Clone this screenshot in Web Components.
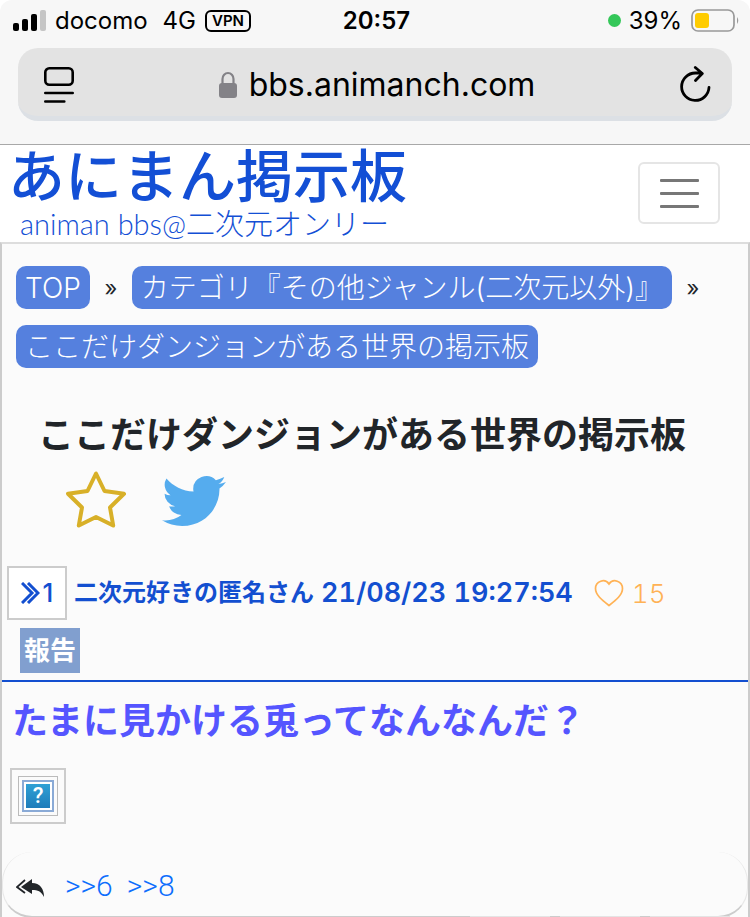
<!DOCTYPE html>
<html lang="ja">
<head>
<meta charset="utf-8">
<meta name="viewport" content="width=device-width, initial-scale=1">
<title>ここだけダンジョンがある世界の掲示板</title>
<style>
  html {
    height: 100%;
    overflow: hidden;
    background: #fff;
  }

  body {
    margin: 0;
    color: #212529;
    font-family: Inter, "Noto Sans CJK JP", sans-serif;
  }

  main {
    border: 2px solid #ccc;
    border-top-color: #ddd;
    border-bottom: 0;
    background: #fbfbfb;
  }
</style>
</head>
<body>
<browser-bar host="bbs.animanch.com">
  <status-bar carrier="docomo" network="4G" time="20:57" battery="39"></status-bar>
</browser-bar>
<site-header>
  <span>あにまん掲示板</span>
  <span slot="sub">animan bbs@二次元オンリー</span>
</site-header>
<main>
  <bread-crumbs>
    <crumb-link>TOP</crumb-link>
    <crumb-link>カテゴリ『その他ジャンル(二次元以外)』</crumb-link>
    <crumb-link last>ここだけダンジョンがある世界の掲示板</crumb-link>
  </bread-crumbs>
  <thread-title>ここだけダンジョンがある世界の掲示板</thread-title>
  <thread-post number="1" name="二次元好きの匿名さん" date="21/08/23 19:27:54" likes="15">
    たまに見かける兎ってなんなんだ？
    <missing-image slot="image"></missing-image>
  </thread-post>
  <reply-list>
    <reply-link to="6"></reply-link>
    <reply-link to="8"></reply-link>
  </reply-list>
</main>

<script>
(function() {
  class StatusBar extends HTMLElement {
    constructor() {
      super();

      this.attachShadow({ mode: 'open' });

      this.shadowRoot.innerHTML = `
        <style>
          :host {
            display: grid;
            grid-template-columns: 1fr auto 1fr;
            align-items: center;
            height: 41px;
            padding: 0 10px 0 13px;
            color: #000;
            font-size: 24px;
            line-height: 30px;
          }
          div {
            display: flex;
            align-items: center;
          }
          .right {
            justify-content: flex-end;
          }
          svg {
            display: block;
          }
          .carrier {
            margin: 0 15px 0 8px;
          }
          .vpn {
            margin-left: 9px;
            padding: 0 5px;
            border: 2px solid #000;
            border-radius: 6px;
            font-size: 15px;
            font-weight: 600;
            line-height: 18px;
          }
          .time {
            font-weight: 600;
          }
          .dot {
            width: 13px;
            height: 13px;
            margin-right: 8px;
            border-radius: 50%;
            background: #34c759;
          }
          .battery {
            margin-left: 9px;
          }
        </style>

        <div>
          <svg width="34" height="22" viewBox="0 0 34 22">
            <rect x="0" y="13" width="6" height="8" rx="2"/>
            <rect x="9" y="9" width="6" height="12" rx="2"/>
            <rect x="18" y="4" width="6" height="17" rx="2"/>
            <rect x="27" y="0" width="6" height="21" rx="2" fill="#c5c5c5"/>
          </svg>
          <span class="carrier"></span>
          <span class="network"></span>
          <span class="vpn">VPN</span>
        </div>
        <div class="time"></div>
        <div class="right">
          <span class="dot"></span>
          <span class="percent"></span>
          <svg class="battery" width="49" height="24" viewBox="0 0 49 24">
            <rect x="1" y="1" width="42" height="21" rx="6" fill="none" stroke="#999" stroke-width="1.7"/>
            <rect x="4" y="4" width="14" height="15" rx="3" fill="#fc0"/>
            <path d="M46 8q2.500 3.500 0 7z" fill="#999"/>
          </svg>
        </div>
      `
    }

    connectedCallback() {
      this.shadowRoot.querySelector('.carrier').textContent = this.getAttribute('carrier');
      this.shadowRoot.querySelector('.network').textContent = this.getAttribute('network');
      this.shadowRoot.querySelector('.time').textContent = this.getAttribute('time');
      this.shadowRoot.querySelector('.percent').textContent = this.getAttribute('battery') + '%';
    }
  }

  class BrowserBar extends HTMLElement {
    constructor() {
      super();

      this.attachShadow({ mode: 'open' });

      this.shadowRoot.innerHTML = `
        <style>
          :host {
            display: block;
            padding-bottom: 23px;
            border-bottom: 1px solid #a8a8a8;
            border-radius: 12px 12px 0 0;
            background: #f7f7f7;
            color: #000;
          }
          .address {
            display: flex;
            align-items: center;
            justify-content: space-between;
            box-sizing: border-box;
            height: 73px;
            margin: 7px 18px 0;
            padding: 5px 20px 0 24px;
            border-bottom: 5px solid #dce0e5;
            border-radius: 20px;
            background: #e3e3e3;
          }
          .host {
            display: flex;
            align-items: center;
            gap: 12px;
            font-size: 32px;
            line-height: 40px;
          }
          button {
            padding: 0;
            border: 0;
            background: none;
          }
          svg {
            display: block;
          }
        </style>

        <slot></slot>
        <div class="address">
          <button>
            <svg width="34" height="38" viewBox="0 0 34 38" fill="none" stroke="#000" stroke-width="2.600" stroke-linecap="round">
              <rect x="3.300" y="2.300" width="27.400" height="16.400" rx="4"/>
              <path d="M3.300 27h27.400M3.300 35.500h19"/>
            </svg>
          </button>
          <div class="host">
            <svg width="18" height="28" viewBox="0 0 18 28">
              <rect x="0" y="12" width="18" height="15" rx="3" fill="#838287"/>
              <path d="M3.500 13V8a5.500 6 0 0 1 11 0v5" fill="none" stroke="#838287" stroke-width="2.200"/>
            </svg>
            <span class="name"></span>
          </div>
          <button>
            <svg width="34" height="38" viewBox="0 0 34 38" fill="none" stroke="#000" stroke-width="2.800" stroke-linecap="round" stroke-linejoin="round">
              <path d="M31 21.500a13.700 13.700 0 1 1-13.700-14.500h6M17.300 1.500l7 6-6.800 7"/>
            </svg>
          </button>
        </div>
      `
    }

    connectedCallback() {
      this.shadowRoot.querySelector('.name').textContent = this.getAttribute('host');
    }
  }

  class SiteHeader extends HTMLElement {
    constructor() {
      super();

      this.attachShadow({ mode: 'open' });

      this.shadowRoot.innerHTML = `
        <style>
          :host {
            display: flex;
            align-items: flex-start;
            justify-content: space-between;
            height: 97px;
            padding: 0 30px 0 8px;
            background: #fff;
          }
          a {
            color: #134fd5;
            text-decoration: none;
            white-space: nowrap;
          }
          .name {
            display: block;
            font-family: "Liberation Sans", "Noto Sans CJK JP", sans-serif;
            font-size: 57px;
            font-weight: 500;
            line-height: 64px;
          }
          .sub {
            display: block;
            padding-left: 12px;
            font-family: Lato, "Noto Sans CJK JP", sans-serif;
            font-size: 29px;
            font-weight: 300;
            line-height: 30px;
          }
          button {
            display: flex;
            flex-direction: column;
            align-items: center;
            justify-content: center;
            gap: 10px;
            width: 82px;
            height: 62px;
            margin: 17px 0 0;
            padding: 0;
            border: 2px solid #e5e5e5;
            border-radius: 6px;
            background: none;
          }
          i {
            width: 39px;
            height: 3px;
            border-radius: 1px;
            background: #777;
          }
        </style>

        <a href="#">
          <span class="name"><slot></slot></span>
          <span class="sub"><slot name="sub"></slot></span>
        </a>
        <button><i></i><i></i><i></i></button>
      `
    }
  }

  class BreadCrumbs extends HTMLElement {
    constructor() {
      super();

      this.attachShadow({ mode: 'open' });

      this.shadowRoot.innerHTML = `
        <style>
          :host {
            display: block;
            padding: 22px 14px 0;
          }
          nav {
            display: flex;
            flex-wrap: wrap;
            row-gap: 16px;
          }
        </style>

        <nav><slot></slot></nav>
      `
    }
  }

  class CrumbLink extends HTMLElement {
    constructor() {
      super();

      this.attachShadow({ mode: 'open' });

      this.shadowRoot.innerHTML = `
        <style>
          :host {
            display: flex;
            align-items: center;
          }
          a {
            padding: 1px 9px 0;
            border-radius: 10px;
            background: #5580de;
            color: #fff;
            font-size: 28px;
            font-weight: 300;
            line-height: 42px;
            text-decoration: none;
            white-space: nowrap;
          }
          span {
            width: 42px;
            font-size: 22px;
            line-height: 42px;
            text-align: center;
          }
          :host([last]) span {
            display: none;
          }
        </style>

        <a href="#"><slot></slot></a>
        <span>»</span>
      `
    }
  }

  class ThreadTitle extends HTMLElement {
    constructor() {
      super();

      this.attachShadow({ mode: 'open' });

      this.shadowRoot.innerHTML = `
        <style>
          :host {
            display: block;
            padding: 40px 36px 0;
          }
          h1 {
            margin: 0;
            font-size: 36px;
            font-weight: 700;
            line-height: 54px;
          }
          div {
            display: flex;
            align-items: center;
            gap: 36px;
            padding: 9px 28px 0;
          }
          button {
            padding: 0;
            border: 0;
            background: none;
          }
          svg {
            display: block;
          }
        </style>

        <h1><slot></slot></h1>
        <div>
          <button>
            <svg width="60" height="58" viewBox="0 0 60 58" fill="none" stroke="#d8b028" stroke-width="4" stroke-linejoin="round">
              <path d="M30 2.500L21.500 20L2 22.800L16 36.500L12.800 54.500L30 46L47.200 54.500L44 36.500L58 22.800L38.500 20Z"/>
            </svg>
          </button>
          <a href="#">
            <svg width="64" height="54" viewBox="0 -1.200 24 20.250" fill="#55acee">
              <path transform="scale(1 .96)" d="M24 2.300a9.800 9.800 0 0 1-2.830.78A4.940 4.940 0 0 0 23.340.350a9.900 9.900 0 0 1-3.130 1.190A4.920 4.920 0 0 0 11.700 4.900c0 .4.040.76.130 1.120C7.700 5.800 4.100 3.800 1.670.850a4.930 4.930 0 0 0 1.520 6.570 4.900 4.900 0 0 1-2.230-.610v.060a4.930 4.930 0 0 0 3.950 4.830 4.900 4.900 0 0 1-2.220.080 4.930 4.930 0 0 0 4.600 3.420A9.870 9.870 0 0 1 0 17.240 13.940 13.940 0 0 0 7.550 19.450c9.060 0 14.200-7.700 14-14.600A10 10 0 0 0 24 2.300z"/>
            </svg>
          </a>
        </div>
      `
    }
  }

  class ThreadPost extends HTMLElement {
    constructor() {
      super();

      this.attachShadow({ mode: 'open' });

      this.shadowRoot.innerHTML = `
        <style>
          :host {
            display: block;
          }
          header {
            padding: 37px 5px 7px;
            border-bottom: 2px solid #134fd0;
            color: #134fd0;
          }
          .meta {
            display: flex;
            align-items: center;
            font-size: 24px;
            line-height: 36px;
            white-space: nowrap;
          }
          .number {
            display: flex;
            align-items: center;
            justify-content: center;
            gap: 3px;
            box-sizing: border-box;
            width: 60px;
            height: 54px;
            margin-right: 7px;
            border: 2px solid #ccc;
            background: #fff;
            color: inherit;
            font-size: 26px;
            font-weight: 500;
            text-decoration: none;
          }
          .name {
            margin-right: 7px;
            font-weight: 600;
          }
          time {
            font-size: 27px;
            font-variant-numeric: tabular-nums;
            font-weight: 600;
          }
          button {
            padding: 0;
            border: 0;
            background: none;
            font-family: inherit;
          }
          .like {
            display: flex;
            align-items: center;
            gap: 8px;
            margin-left: 21px;
            color: #ffb255;
            font-size: 26px;
            font-variant-numeric: tabular-nums;
            font-weight: 300;
          }
          .report {
            display: block;
            margin: 8px 0 0 13px;
            padding: 0 4px;
            background: #819fcf;
            color: #fff;
            font-size: 26px;
            font-weight: 700;
            line-height: 45px;
          }
          p {
            margin: 0;
            padding: 12px 10px 0;
            color: #55f;
            font-size: 36px;
            font-weight: 600;
            line-height: 54px;
          }
          .image {
            display: flex;
            padding: 20px 8px 0;
          }
          svg {
            display: block;
          }
        </style>

        <header>
          <div class="meta">
            <a class="number" href="#">
              <svg width="19" height="22" viewBox="0 0 19 22" fill="none" stroke="#134fd0" stroke-width="3">
                <path d="M1 1l10 10L1 21M7 1l10 10L7 21"/>
              </svg>
              <span></span>
            </a>
            <span class="name"></span>
            <time></time>
            <button class="like">
              <svg width="30" height="28" viewBox="0 0 30 28" fill="none" stroke="#ffb255" stroke-width="1.700">
                <path d="M15 26.500C8 21 1.500 16 1.500 9.500C1.500 2 11 -1 15 5C19 -1 28.500 2 28.500 9.500C28.500 16 22 21 15 26.500Z"/>
              </svg>
              <span></span>
            </button>
          </div>
          <button class="report">報告</button>
        </header>
        <p><slot></slot></p>
        <div class="image"><slot name="image"></slot></div>
      `
    }

    connectedCallback() {
      this.shadowRoot.querySelector('.number span').textContent = this.getAttribute('number');
      this.shadowRoot.querySelector('.name').textContent = this.getAttribute('name');
      this.shadowRoot.querySelector('time').textContent = this.getAttribute('date');
      this.shadowRoot.querySelector('.like span').textContent = this.getAttribute('likes');
    }
  }

  class MissingImage extends HTMLElement {
    constructor() {
      super();

      this.attachShadow({ mode: 'open' });

      this.shadowRoot.innerHTML = `
        <style>
          :host {
            display: block;
            padding: 6px;
            border: 2px solid #ccc;
          }
          div {
            padding: 3px;
            border: 1px solid #bbb;
          }
          span {
            display: block;
            width: 24px;
            height: 24px;
            border: 2px solid #fff;
            outline: 2px solid #8aaad6;
            margin: 2px;
            background: linear-gradient(#2fa0d5, #1f7cba) padding-box;
            color: #fff;
            font-family: Roboto, sans-serif;
            font-size: 22px;
            font-weight: 500;
            line-height: 24px;
            text-align: center;
          }
        </style>

        <div><span>?</span></div>
      `
    }
  }

  class ReplyList extends HTMLElement {
    constructor() {
      super();

      this.attachShadow({ mode: 'open' });

      this.shadowRoot.innerHTML = `
        <style>
          :host {
            display: block;
            padding-top: 28px;
          }
          .list {
            display: flex;
            align-items: center;
            gap: 14px;
            height: 60px;
            padding: 4px 13px 0;
            border: 1px solid #e8e8e8;
            border-top-width: 0;
            border-bottom: 2px solid #ccc;
            border-radius: 30px;
          }
          svg {
            margin-right: 6px;
          }
          .actions {
            display: flex;
            justify-content: flex-end;
            gap: 10px;
            margin-top: -2px;
            padding-right: 18px;
          }
          .actions span {
            width: 80px;
            height: 40px;
            border-top: 2px solid #e4e4e4;
          }
        </style>

        <div class="list">
          <svg width="29" height="22" viewBox="0 -4 29 22">
            <path d="M5 8L16 0v4c8 0 12 6 12 14c-3-6-6-7-12-7v4z" fill="#212529"/>
            <path d="M9 1L1 8l8 6" fill="none" stroke="#212529" stroke-width="1.800"/>
          </svg>
          <slot></slot>
        </div>
        <div class="actions"><span></span><span></span><span></span></div>
      `
    }
  }

  class ReplyLink extends HTMLElement {
    constructor() {
      super();

      this.attachShadow({ mode: 'open' });

      this.shadowRoot.innerHTML = `
        <style>
          :host {
            display: block;
          }
          a {
            color: #0d6efd;
            font-family: Roboto, sans-serif;
            font-size: 30px;
            font-weight: 300;
            line-height: 42px;
            text-decoration: none;
          }
        </style>

        <a href="#"></a>
      `
    }

    connectedCallback() {
      this.shadowRoot.querySelector('a').textContent = '>>' + this.getAttribute('to');
    }
  }

  window.customElements.define('status-bar', StatusBar);
  window.customElements.define('browser-bar', BrowserBar);
  window.customElements.define('site-header', SiteHeader);
  window.customElements.define('bread-crumbs', BreadCrumbs);
  window.customElements.define('crumb-link', CrumbLink);
  window.customElements.define('thread-title', ThreadTitle);
  window.customElements.define('thread-post', ThreadPost);
  window.customElements.define('missing-image', MissingImage);
  window.customElements.define('reply-list', ReplyList);
  window.customElements.define('reply-link', ReplyLink);
})();
</script>
</body>
</html>
